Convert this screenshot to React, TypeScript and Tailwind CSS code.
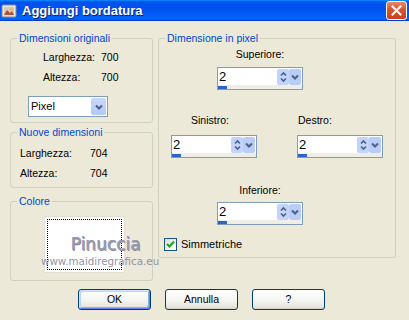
import React from "react";

const SANS = "font-['Liberation_Sans',Arial,sans-serif]";

function Group({ title, className, children }: { title: string; className?: string; children?: React.ReactNode }) {
  return (
    <fieldset className={`rounded-[3px] border border-[#D0D0BF] ${className ?? ""}`}>
      <legend className="ml-[6px] px-[2px] text-[#0046D5] leading-[13px]">{title}</legend>
      {children}
    </fieldset>
  );
}

function SpinBox({ value }: { value: string }) {
  return (
    <div className="flex h-[23px] w-[86px] flex-col border border-[#7F9DB9] bg-white">
      <div className="flex h-[17px]">
        <div className="flex-1 pl-[1px] text-[13px] leading-[17px] text-black">{value}</div>
        <div className="mt-[1px] flex h-[16px] w-[12px] items-center justify-center rounded-[2px] bg-[#C3D3FA]">
          <svg width="7" height="12" viewBox="0 0 7 12">
            <path d="M1 4.5 L3.5 2 L6 4.5" fill="none" stroke="#4D6185" strokeWidth="1.6" />
            <path d="M1 7.5 L3.5 10 L6 7.5" fill="none" stroke="#4D6185" strokeWidth="1.6" />
          </svg>
        </div>
        <div className="mt-[1px] mr-[1px] flex h-[16px] w-[12px] items-center justify-center rounded-[2px] bg-[#B9CDF8]">
          <svg width="8" height="6" viewBox="0 0 8 6">
            <path d="M1 1.5 L4 4.5 L7 1.5" fill="none" stroke="#4D6185" strokeWidth="2" />
          </svg>
        </div>
      </div>
      <div className="flex h-[4px] items-center bg-[#EEEDE6]">
        <div className="h-[3px] w-[9px] bg-[#2F63C6]" />
      </div>
    </div>
  );
}

function Button({ label, primary }: { label: string; primary?: boolean }) {
  return (
    <div
      className={`flex h-[21px] w-[73px] items-center justify-center rounded-[3px] border border-[#003C74] bg-[linear-gradient(180deg,#FFFFFF,#F3F3EF_60%,#E6E4DA_90%,#D6D0C5)] text-black ${
        primary
          ? "shadow-[inset_1px_1px_0_#CEE7FF,inset_-1px_-1px_0_#6982EE,inset_2px_2px_0_#BCD4F6,inset_-2px_-2px_0_#89ADE4]"
          : ""
      }`}
    >
      {label}
    </div>
  );
}

export default function App() {
  return (
    <div className={`relative h-[320px] w-[409px] overflow-hidden bg-[#ECE9D8] text-[10.5px] leading-[13px] text-black ${SANS}`}>
      {/* Title bar */}
      <div className="flex h-[21px] items-center bg-[linear-gradient(180deg,#0997FF,#0053EE_8%,#0050EE_40%,#0062F8_85%,#0066FF_92%,#003DD7_96%,#003DD7)] pl-[1px] pr-[2px]">
        <svg width="17" height="16" viewBox="0 0 17 16">
          <rect x="1" y="2" width="14" height="12" rx="1" fill="#E8E6E0" stroke="#8C8C8C" />
          <rect x="3" y="4" width="10" height="8" fill="#D8C8B8" />
          <path d="M3 12 L6 7 L9 10 L11 8 L13 12 Z" fill="#B2503A" />
          <circle cx="10.5" cy="6" r="1.3" fill="#F2B84A" />
        </svg>
        <span className="ml-[4px] font-bold text-[13px] text-white [text-shadow:1px_1px_0_#0A246A]">Aggiungi bordatura</span>
        <div className="ml-auto flex h-[19px] w-[21px] items-center justify-center rounded-[3px] border border-white bg-[linear-gradient(180deg,#E9866A,#D65530_45%,#C9421F)]">
          <svg width="11" height="11" viewBox="0 0 11 11">
            <path d="M1.5 1.5 L9.5 9.5 M9.5 1.5 L1.5 9.5" stroke="white" strokeWidth="2" strokeLinecap="square" />
          </svg>
        </div>
      </div>

      {/* Body */}
      <div className="flex gap-[5px] pl-[10px] pt-[11px]">
        <div className="flex w-[143px] flex-col">
          <Group title="Dimensioni originali" className="h-[91px]">
            <div className="mt-[6px] flex pl-[32px]">
              <span className="w-[58px]">Larghezza:</span>
              <span>700</span>
            </div>
            <div className="mt-[7px] flex pl-[32px]">
              <span className="w-[58px]">Altezza:</span>
              <span>700</span>
            </div>
            <div className="ml-[17px] mt-[12px] flex h-[21px] w-[80px] items-center border border-[#7F9DB9] bg-white">
              <span className="flex-1 pl-[2px] text-[11px]">Pixel</span>
              <div className="mr-[1px] flex h-[17px] w-[15px] items-center justify-center rounded-[2px] bg-[linear-gradient(180deg,#C8D8FC,#B4C8F6)]">
                <svg width="8" height="6" viewBox="0 0 8 6">
                  <path d="M1 1.5 L4 4.5 L7 1.5" fill="none" stroke="#4D6185" strokeWidth="2" />
                </svg>
              </div>
            </div>
          </Group>

          <Group title="Nuove dimensioni" className="mt-[3px] h-[62px]">
            <div className="mt-[8px] flex pl-[9px]">
              <span className="w-[70px]">Larghezza:</span>
              <span>704</span>
            </div>
            <div className="mt-[7px] flex pl-[9px]">
              <span className="w-[70px]">Altezza:</span>
              <span>704</span>
            </div>
          </Group>

          <Group title="Colore" className="mt-[7px] h-[86px]">
            <div className="ml-[33px] mt-[8px] h-[57px] w-[81px] border border-[#E2DFD4] bg-white p-[2px]">
              <div className="h-full w-full border border-dotted border-black" />
            </div>
          </Group>
        </div>

        <Group title="Dimensione in pixel" className="h-[226px] w-[238px]">
          <div className="ml-[58px] mt-[3px] flex w-[86px] flex-col items-center">
            <span>Superiore:</span>
            <div className="mt-[6px]">
              <SpinBox value="2" />
            </div>
          </div>

          <div className="mt-[24px] flex">
            <div className="ml-[12px] flex w-[86px] flex-col">
              <span className="pl-[20px]">Sinistro:</span>
              <div className="mt-[8px]">
                <SpinBox value="2" />
              </div>
            </div>
            <div className="ml-[40px] flex w-[86px] flex-col">
              <span className="pl-[1px]">Destro:</span>
              <div className="mt-[8px]">
                <SpinBox value="2" />
              </div>
            </div>
          </div>

          <div className="ml-[58px] mt-[26px] flex w-[86px] flex-col items-center">
            <span>Inferiore:</span>
            <div className="mt-[5px]">
              <SpinBox value="2" />
            </div>
          </div>

          <div className="ml-[5px] mt-[13px] flex items-center gap-[4px]">
            <div className="flex h-[13px] w-[13px] items-center justify-center border border-[#1C5180] bg-[linear-gradient(135deg,#DCDCD7,#FFFFFF)]">
              <svg width="9" height="9" viewBox="0 0 9 9">
                <path d="M1 4 L3.5 6.5 L8 1.5" fill="none" stroke="#21A121" strokeWidth="2" />
              </svg>
            </div>
            <span className="text-[11px]">Simmetriche</span>
          </div>
        </Group>
      </div>

      {/* Buttons */}
      <div className="mt-[8px] flex gap-[14px] pl-[78px]">
        <Button label="OK" primary />
        <Button label="Annulla" />
        <Button label="?" />
      </div>

      {/* Watermark */}
      <div className="pointer-events-none absolute left-[71px] top-[234px] font-['DejaVu_Sans',sans-serif] text-[17px] leading-[20px] text-[#9A9AB0] [text-shadow:0.5px_0.5px_0_#8A8AA0,-0.5px_0_0_#A6A6BA]">
        Pinuccia
      </div>
      <div className="pointer-events-none absolute left-[41px] top-[255px] font-['DejaVu_Sans',sans-serif] text-[10.3px] leading-[12px] text-[#9292A8]">
        www.maidiregrafica.eu
      </div>
    </div>
  );
}
